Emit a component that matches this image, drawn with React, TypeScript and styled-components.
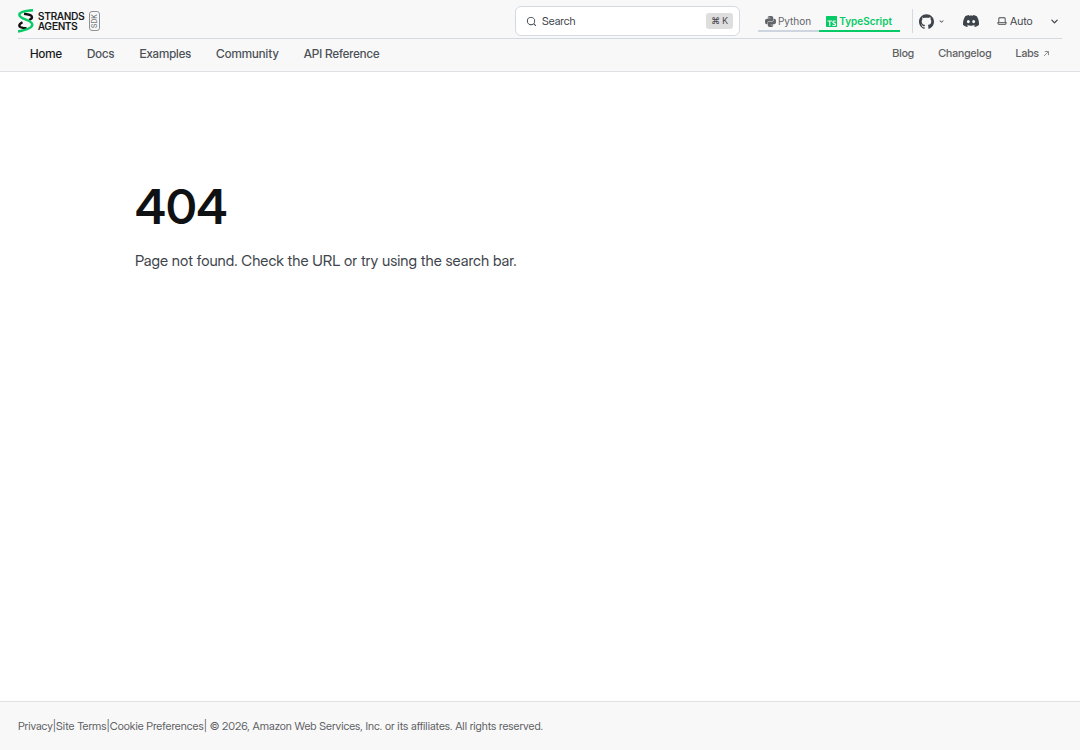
import React from "react";
import styled, { createGlobalStyle, css } from "styled-components";
import { SiDiscord, SiGithub, SiPython, SiTypescript } from "react-icons/si";

const fontStack = `"Inter Display", Inter, "Liberation Sans", sans-serif`;

const GlobalStyle = createGlobalStyle`
  *, *::before, *::after { box-sizing: border-box; }
  body {
    margin: 0;
    background: #fff;
    color: #3e444b;
    font-family: ${fontStack};
  }
  button, select, kbd { font-family: inherit; }
  a { color: inherit; text-decoration: none; }
`;

const Page = styled.div`
  display: flex;
  flex-direction: column;
  min-height: 100vh;
`;

const Header = styled.header`
  padding: 0 18px;
  background: #f8f8f8;
  border-bottom: 1px solid #dfe1e4;
`;

const TopRow = styled.div`
  display: flex;
  align-items: center;
  height: 39px;
  padding-top: 4px;
  border-bottom: 1px solid #d3dae2;
`;

const Brand = styled.a`
  display: flex;
  align-items: center;
  margin-right: auto;
  color: #16181a;
`;

const BrandName = styled.span`
  margin-left: 4px;
  font-size: 10px;
  font-weight: 600;
  line-height: 10px;
`;

const SdkBadge = styled.span`
  display: flex;
  align-items: center;
  justify-content: center;
  width: 11px;
  height: 20px;
  margin-left: 4px;
  border: 1px solid #8f9193;
  border-radius: 3px;
  color: #777a7d;
  font-size: 7px;
  font-weight: 500;
  line-height: 9px;
  writing-mode: vertical-rl;
  transform: rotate(180deg);
`;

const SearchButton = styled.button`
  display: flex;
  align-items: center;
  width: 225px;
  height: 30px;
  padding: 0 6px 0 10px;
  background: #fff;
  border: 1px solid #d3dae2;
  border-radius: 6px;
  color: #3e444b;
  font-size: 11px;
  line-height: 16px;
`;

const SearchLabel = styled.span`
  margin: 0 auto 0 5px;
`;

const Shortcut = styled.kbd`
  padding: 0 5px;
  background: #dedede;
  border-radius: 3px;
  font-size: 9px;
  line-height: 16px;
`;

const LanguageSwitch = styled.div`
  display: flex;
  margin-left: 18px;
`;

const LanguageButton = styled.button<{ $active?: boolean }>`
  display: flex;
  align-items: center;
  gap: 2px;
  height: 22px;
  padding: 2px 8px 0 7px;
  background: none;
  border: 0;
  border-bottom: 2px solid #cdd5de;
  color: #62666a;
  font-family: Inter, "Liberation Sans", sans-serif;
  font-size: 10px;
  line-height: 16px;
  ${({ $active }) =>
    $active &&
    css`
      border-color: #06ca65;
      color: #06ca65;
      font-weight: 600;
    `}
`;

const Divider = styled.span`
  width: 1px;
  height: 24px;
  margin: 0 6px 0 12px;
  background: #d3dae2;
`;

const GithubButton = styled.button`
  display: flex;
  align-items: center;
  gap: 3px;
  padding: 0;
  background: none;
  border: 0;
  color: #3e444b;
`;

const DiscordLink = styled.a`
  display: flex;
  margin-left: 17px;
`;

const ThemePicker = styled.label`
  display: flex;
  align-items: center;
  margin-left: 18px;
`;

const ThemeSelect = styled.select`
  width: 37px;
  margin-left: 3px;
  padding: 0;
  appearance: none;
  background: none;
  border: 0;
  color: #3e444b;
  font-size: 11px;
  line-height: 16px;
`;

const NavRow = styled.nav`
  display: flex;
  align-items: center;
  gap: 25px;
  height: 32px;
  padding: 0 12px 4px;
`;

const NavLink = styled.a<{ $current?: boolean }>`
  padding-top: 2px;
  color: ${({ $current }) => ($current ? "#16181a" : "#4b5157")};
  font-size: 12px;
  font-weight: 500;
  line-height: 20px;
`;

const SideLinks = styled.div`
  display: flex;
  gap: 24px;
  margin-left: auto;
`;

const SideLink = styled.a`
  display: flex;
  align-items: center;
  gap: 4px;
  color: #5d6063;
  font-size: 11px;
  font-weight: 500;
  line-height: 20px;
`;

const Main = styled.main`
  flex: 1;
  width: 75%;
  margin: 0 auto;
  padding-top: 107px;
`;

const Title = styled.h1`
  margin: 0;
  color: #101112;
  font-size: 48px;
  font-weight: 600;
  line-height: 56px;
`;

const Message = styled.p`
  margin: 13px 0 0;
  font-size: 15px;
  line-height: 26px;
`;

const Footer = styled.footer`
  padding: 16px 18px;
  background: #f8f8f8;
  border-top: 1px solid #dfe1e4;
  color: #5d6063;
  font-size: 11px;
  line-height: 16px;
`;

const StrandsLogo = () => (
  <svg width="16" height="24" viewBox="0 0 16 24" fill="none" aria-hidden="true">
    <path d="M6 4.800c4.800.5 8 1.400 8 3.400 0 1.300-1.200 2.100-3 2.800M4.500 13.200C2.500 14.200 1.300 15.400 1.300 16.700c0 1.700 3 2.300 7.200 2.600" stroke="#111" strokeWidth="2.400" />
    <path d="M15 1.300C7 1.800 1.300 3 1.300 5.800c0 2.500 3.200 3.500 6.700 4.800 3.600 1.400 6.300 2.700 6.300 5.200 0 3.500-6 5.200-14.300 6.700" stroke="#06ca65" strokeWidth="2.400" />
  </svg>
);

const SearchIcon = () => (
  <svg width="11" height="11" viewBox="0 0 24 24" fill="currentColor" aria-hidden="true">
    <path d="M21.710 20.290 18 16.610A9 9 0 1 0 16.610 18l3.680 3.680a.999.999 0 0 0 1.420 0 1 1 0 0 0 0-1.390ZM11 18a7 7 0 1 1 0-14 7 7 0 0 1 0 14Z" />
  </svg>
);

const LaptopIcon = () => (
  <svg width="10" height="10" viewBox="1 1 22 22" fill="currentColor" aria-hidden="true">
    <path d="M21 14h-1V7a3 3 0 0 0-3-3H7a3 3 0 0 0-3 3v7H3a1 1 0 0 0-1 1v2a3 3 0 0 0 3 3h14a3 3 0 0 0 3-3v-2a1 1 0 0 0-1-1ZM6 7a1 1 0 0 1 1-1h10a1 1 0 0 1 1 1v7H6V7Zm14 10a1 1 0 0 1-1 1H5a1 1 0 0 1-1-1v-1h16v1Z" />
  </svg>
);

const CaretIcon = ({ size }: { size: number }) => (
  <svg width={size} height={size} viewBox="0 0 24 24" fill="currentColor" aria-hidden="true">
    <path d="M17 9.170a1 1 0 0 0-1.410 0L12 12.710 8.460 9.170a1 1 0 1 0-1.410 1.420l4.240 4.240a1.002 1.002 0 0 0 1.420 0L17 10.590a1.002 1.002 0 0 0 0-1.420Z" />
  </svg>
);

const ExternalIcon = () => (
  <svg width="7" height="7" viewBox="0 0 7 7" fill="none" stroke="#8b8e91" aria-hidden="true">
    <path d="M1 6 5.500 1.500M1.800 1.500h3.700v3.700" />
  </svg>
);

const sections = ["Home", "Docs", "Examples", "Community", "API Reference"];

export default function App() {
  return (
    <Page>
      <GlobalStyle />
      <Header>
        <TopRow>
          <Brand href="#" aria-label="Strands Agents SDK">
            <StrandsLogo />
            <BrandName>
              STRANDS
              <br />
              AGENTS
            </BrandName>
            <SdkBadge>SDK</SdkBadge>
          </Brand>
          <SearchButton type="button">
            <SearchIcon />
            <SearchLabel>Search</SearchLabel>
            <Shortcut>⌘ K</Shortcut>
          </SearchButton>
          <LanguageSwitch role="group" aria-label="Language">
            <LanguageButton type="button" aria-pressed={false}>
              <SiPython size={11} />
              Python
            </LanguageButton>
            <LanguageButton type="button" aria-pressed $active>
              <SiTypescript size={11} />
              TypeScript
            </LanguageButton>
          </LanguageSwitch>
          <Divider />
          <GithubButton type="button" aria-label="GitHub">
            <SiGithub size={15} />
            <CaretIcon size={9} />
          </GithubButton>
          <DiscordLink href="#" aria-label="Discord">
            <SiDiscord size={16} />
          </DiscordLink>
          <ThemePicker>
            <LaptopIcon />
            <ThemeSelect aria-label="Select theme" defaultValue="Auto">
              <option>Dark</option>
              <option>Light</option>
              <option>Auto</option>
            </ThemeSelect>
            <CaretIcon size={15} />
          </ThemePicker>
        </TopRow>
        <NavRow>
          {sections.map((name) => (
            <NavLink key={name} href="#" $current={name === "Home"}>
              {name}
            </NavLink>
          ))}
          <SideLinks>
            <SideLink href="#">Blog</SideLink>
            <SideLink href="#">Changelog</SideLink>
            <SideLink href="#">
              Labs
              <ExternalIcon />
            </SideLink>
          </SideLinks>
        </NavRow>
      </Header>
      <Main>
        <Title>404</Title>
        <Message>Page not found. Check the URL or try using the search bar.</Message>
      </Main>
      <Footer>
        <a href="#">Privacy</a>|<a href="#">Site Terms</a>|<a href="#">Cookie Preferences</a>| © 2026, Amazon Web
        Services, Inc. or its affiliates. All rights reserved.
      </Footer>
    </Page>
  );
}
